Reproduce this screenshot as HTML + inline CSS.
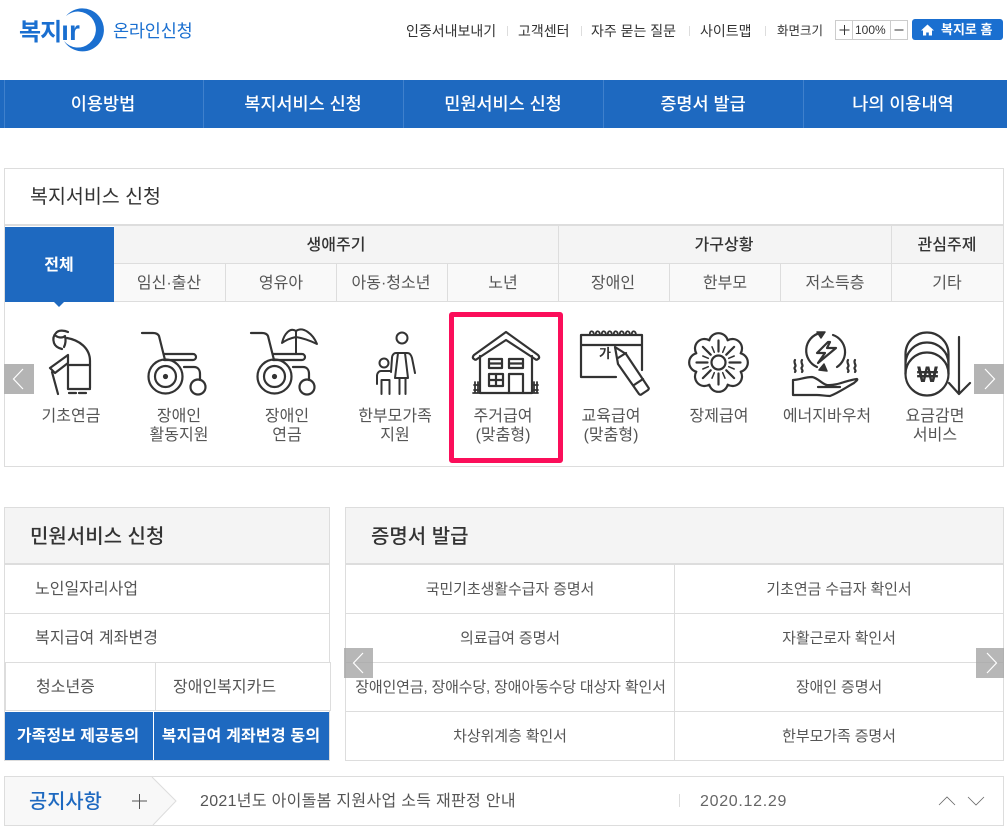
<!DOCTYPE html>
<html lang="ko"><head><meta charset="utf-8"><title>복지로 온라인신청</title>
<style>
html,body{margin:0;padding:0;background:#fff}
body{width:1007px;height:829px;overflow:hidden;position:relative;font-family:"Liberation Sans","Noto Sans CJK KR",sans-serif;color:#444}
.a{position:absolute;box-sizing:border-box}
.t{position:absolute;white-space:nowrap;text-align:center;transform:translateX(-50%);line-height:20px}
.l{position:absolute;white-space:nowrap;line-height:20px}
.ln{position:absolute;background:#ddd}
svg{position:absolute;overflow:visible}
.ic{fill:none;stroke:#333;stroke-width:2.2;stroke-linecap:round;stroke-linejoin:round}
.lab{font-size:16px;color:#555;line-height:20px}
.r{font-size:15px;color:#555;letter-spacing:-.1px}
</style></head><body>

<!-- logo -->
<svg style="left:0;top:0" width="110" height="60"><path d="M66 16A21.500 21.500 0 1 1 64 41A18 18 0 1 0 66 16Z" fill="#1a6fd0"/></svg>
<div class="l" style="left:19px;top:16px;font-size:24px;font-weight:700;color:#1a6fd0;line-height:30px;letter-spacing:-1px">복지<span style="font-family:'Liberation Sans';font-size:28px;letter-spacing:0">ır</span></div>
<div class="l" style="left:113px;top:21px;font-size:17.500px;color:#1a6fd0;letter-spacing:-.2px">온라인신청</div>

<!-- util -->
<div class="l" style="left:406px;top:21px;font-size:14px;color:#333">인증서내보내기</div>
<div class="l" style="left:518px;top:21px;font-size:14px;color:#333">고객센터</div>
<div class="l" style="left:591px;top:21px;font-size:14px;color:#333">자주 묻는 질문</div>
<div class="l" style="left:700px;top:21px;font-size:14px;color:#333">사이트맵</div>
<div class="l" style="left:777px;top:21px;font-size:12.500px;color:#333">화면크기</div>
<div class="ln" style="left:507px;top:26px;width:1px;height:10px"></div>
<div class="ln" style="left:581px;top:26px;width:1px;height:10px"></div>
<div class="ln" style="left:689px;top:26px;width:1px;height:10px"></div>
<div class="ln" style="left:765px;top:26px;width:1px;height:10px"></div>
<div class="a" style="left:835px;top:20px;width:73px;height:20px;border:1px solid #ccc"></div>
<div class="ln" style="left:852px;top:20px;width:1px;height:20px;background:#ccc"></div>
<div class="ln" style="left:890px;top:20px;width:1px;height:20px;background:#ccc"></div>
<svg style="left:0;top:0" width="1" height="1"><path d="M839.500 30h10M844.500 25v10M894.500 30h9" stroke="#333" stroke-width="1" fill="none"/></svg>
<div class="l" style="left:855px;top:20px;font-size:12px;color:#333">100%</div>
<div class="a" style="left:912px;top:19px;width:91px;height:21px;background:#1a6fd0;border-radius:3px"></div>
<svg style="left:0;top:0" width="1" height="1"><path d="M921 30.500l6.500-6 6.500 6h-2v5h-3.200v-3h-2.600v3H923v-5z" fill="#fff"/></svg>
<div class="l" style="left:941px;top:20px;font-size:13px;font-weight:700;color:#fff">복지로 홈</div>

<!-- nav -->
<div class="a" style="left:0;top:80px;width:1007px;height:48px;background:#1e69c0"></div>
<div class="ln" style="left:4px;top:80px;width:1px;height:48px;background:#3f80cc"></div>
<div class="ln" style="left:203px;top:80px;width:1px;height:48px;background:#3f80cc"></div>
<div class="ln" style="left:403px;top:80px;width:1px;height:48px;background:#3f80cc"></div>
<div class="ln" style="left:603px;top:80px;width:1px;height:48px;background:#3f80cc"></div>
<div class="ln" style="left:803px;top:80px;width:1px;height:48px;background:#3f80cc"></div>
<div class="t" style="left:103px;top:93.500px;font-size:17.500px;font-weight:500;color:#fff">이용방법</div>
<div class="t" style="left:303px;top:93.500px;font-size:17.500px;font-weight:500;color:#fff">복지서비스 신청</div>
<div class="t" style="left:503px;top:93.500px;font-size:17.500px;font-weight:500;color:#fff">민원서비스 신청</div>
<div class="t" style="left:703px;top:93.500px;font-size:17.500px;font-weight:500;color:#fff">증명서 발급</div>
<div class="t" style="left:903px;top:93.500px;font-size:17.500px;font-weight:500;color:#fff">나의 이용내역</div>

<!-- panel 1 -->
<div class="a" style="left:4px;top:168px;width:1000px;height:299px;border:1px solid #ddd"></div>
<div class="ln" style="left:5px;top:224px;width:998px;height:2px"></div>
<div class="l" style="left:30px;top:187px;font-size:19.500px;color:#333">복지서비스 신청</div>
<div class="a" style="left:114px;top:226px;width:889px;height:38px;background:#f4f4f4"></div>
<div class="a" style="left:114px;top:264px;width:889px;height:37px;background:#f9f9f9"></div>
<div class="ln" style="left:114px;top:263px;width:889px;height:1px"></div>
<div class="ln" style="left:5px;top:301px;width:998px;height:1px"></div>
<div class="ln" style="left:225px;top:264px;width:1px;height:37px"></div>
<div class="ln" style="left:336px;top:264px;width:1px;height:37px"></div>
<div class="ln" style="left:447px;top:264px;width:1px;height:37px"></div>
<div class="ln" style="left:558px;top:226px;width:1px;height:75px"></div>
<div class="ln" style="left:669px;top:264px;width:1px;height:37px"></div>
<div class="ln" style="left:780px;top:264px;width:1px;height:37px"></div>
<div class="ln" style="left:891px;top:226px;width:1px;height:75px"></div>
<div class="a" style="left:5px;top:227px;width:109px;height:75px;background:#1e69c0"></div>
<svg style="left:0;top:0" width="1" height="1"><path d="M54 302h10l-5 5z" fill="#1e69c0"/></svg>
<div class="t" style="left:59px;top:256px;font-size:16px;font-weight:700;color:#fff">전체</div>
<div class="t" style="left:336px;top:236px;font-size:16px;font-weight:500;color:#333">생애주기</div>
<div class="t" style="left:724px;top:236px;font-size:16px;font-weight:500;color:#333">가구상황</div>
<div class="t" style="left:947px;top:236px;font-size:16px;font-weight:500;color:#333">관심주제</div>
<div class="t" style="left:169px;top:274px;font-size:16px;color:#555">임신·출산</div>
<div class="t" style="left:281px;top:274px;font-size:16px;color:#555">영유아</div>
<div class="t" style="left:391px;top:274px;font-size:16px;color:#555">아동·청소년</div>
<div class="t" style="left:503px;top:274px;font-size:16px;color:#555">노년</div>
<div class="t" style="left:613px;top:274px;font-size:16px;color:#555">장애인</div>
<div class="t" style="left:725px;top:274px;font-size:16px;color:#555">한부모</div>
<div class="t" style="left:835px;top:274px;font-size:16px;color:#555">저소득층</div>
<div class="t" style="left:947px;top:274px;font-size:16px;color:#555">기타</div>

<!-- carousel arrows -->
<div class="a" style="left:4px;top:364px;width:30px;height:30px;background:#b4b4b4"></div>
<div class="a" style="left:974px;top:364px;width:30px;height:30px;background:#b4b4b4"></div>
<svg style="left:0;top:0" width="1" height="1"><path d="M23 369l-9.500 10 9.500 10M985 369l9.500 10-9.500 10" fill="none" stroke="#fff" stroke-width="1.200"/></svg>

<!-- icons -->
<svg class="ic" style="left:0;top:0" width="1" height="1">
<!-- grandma -->
<path d="M68 332c-4-2-10-2-12 1-3 3-3 7-2 10 1 3 4 5 8 6M56 336c3 2 7 2 9 0 1 4 1 7-1 11"/>
<path d="M67 338c12 2 23 10 23 23v27M68 355L50 368l5 5 13-10M68 355v8M52 372l6 22"/>
<path d="M68 365h22M68 365v24h22M69 393h7M79 393h7"/>
<!-- wheelchair 1 -->
<path d="M142 333h11c3 0 5 1 6 3l6 24"/><path d="M164 354h29a3 3 0 0 1 0 6h-29"/><path d="M184 367h10c4 0 6 3 6 7v6"/><circle cx="165.500" cy="376.500" r="17"/><circle cx="165.500" cy="376.500" r="10.500"/><circle cx="165.500" cy="376.500" r="1.500" fill="#333"/><circle cx="198" cy="387" r="7.500"/>
<!-- wheelchair 2 -->
<path d="M251 333h11c3 0 5 1 6 3l6 24"/><path d="M273 354h29a3 3 0 0 1 0 6h-29"/><path d="M293 367h10c4 0 6 3 6 7v6"/><circle cx="274.500" cy="376.500" r="17"/><circle cx="274.500" cy="376.500" r="10.500"/><circle cx="274.500" cy="376.500" r="1.500" fill="#333"/><circle cx="307" cy="387" r="7.500"/>
<path d="M296 353v-20M296 331c-6-4-12 3-14 12 4-3 9-5 14-6M296 331c7-5 17 3 21 13-6-3-15-6-21-7z" stroke-width="2"/>
<!-- family -->
<circle cx="402" cy="338" r="5.500" stroke-width="2"/>
<path d="M391 372l1-14c0-3 2-5 4-5h11c3 0 4 2 5 5l3 15M398 353l-3 25h13l-3-25M399.500 378v16M405.500 378v16" stroke-width="2"/>
<circle cx="384" cy="363" r="4.500" stroke-width="2"/><path d="M377 384v-8c0-3 2-5 4-5h9M381.500 394v-14h8v14" stroke-width="2"/>
<!-- house -->
<path d="M474 359c-2-1-1-3 0-4l32-23 32 23c1 1 2 3 0 4-1 1-2 1-3 0l-29-19-29 19c-1 1-2 1-3 0z"/>
<path d="M480 356v37h52v-37"/><rect x="489" y="359" width="13" height="9"/><rect x="509" y="359" width="14" height="9"/><path d="M489 363.500h13M509 363.500h14"/><rect x="489" y="374" width="14" height="12"/><path d="M496 374v12M489 380h14"/><path d="M509 393v-19h14v19"/>
<path d="M474 385h6M474 390h6M475 382v11M478 382v11M532 385h6M532 390h6M534 382v11M537 382v11M473 393h65" stroke-width="1.800"/>
<!-- calendar/pencil -->
<path d="M616 377h-35V335h61v35M581 345h61"/>
<path d="M590 335c-1-5 4-5 4 0M596 335c-1-5 4-5 4 0M602 335c-1-5 4-5 4 0M608 335c-1-5 4-5 4 0M614 335c-1-5 4-5 4 0M620 335c-1-5 4-5 4 0M626 335c-1-5 4-5 4 0M632 335c-1-5 4-5 4 0" stroke-width="1.800"/>
<path d="M615 347l11 7 22 33c1 1 1 2 0 3l-6 4c-1 1-2 1-3 0l-21-30zM618 358l8-5M634 385l9-6"/>
<!-- flower -->
<circle cx="718.500" cy="362.500" r="7"/>
<path d="M727.700 340.300A9.500 9.500 0 0 1 740.700 353.300A9.500 9.500 0 0 1 740.700 371.700A9.500 9.500 0 0 1 727.700 384.700A9.500 9.500 0 0 1 709.300 384.700A9.500 9.500 0 0 1 696.300 371.700A9.500 9.500 0 0 1 696.300 353.300A9.500 9.500 0 0 1 709.300 340.300A9.500 9.500 0 0 1 727.700 340.300Z"/>
<path d="M718.500 351.500v-11M718.500 373.500v11M707.500 362.500h-11M729.500 362.500h11M710.700 354.700l-7.800-7.800M726.300 354.700l7.800-7.800M710.700 370.300l-7.800 7.800M726.300 370.300l7.800 7.800"/>
<path d="M722.700 352.300l2.300-5.500M714.300 352.300l-2.300-5.500M722.700 372.700l2.300 5.500M714.300 372.700l-2.300 5.500M708.300 358.300l-5.500-2.300M708.300 366.700l-5.500 2.300M728.700 358.300l5.500-2.300M728.700 366.700l5.500 2.300" stroke-width="1.500"/>
<!-- energy -->
<path d="M820 333a18 18 0 0 0-3 34M833 335a18 18 0 0 1 4 32"/>
<path d="M817 332l8 0-4 6zM827 371l-8-1 5-6z" fill="#333" stroke-width="1.500"/>
<path d="M828 342l-11 11h8l-7 10 18-15h-9l3-6z"/>
<path d="M795 360c-2 3 2 5 0 7s2 3 0 5M802 360c-2 3 2 5 0 7s2 3 0 5M848 360c-2 3 2 5 0 7s2 3 0 5M855 360c-2 3 2 5 0 7s2 3 0 5"/>
<path d="M793 380c6 0 12-3 19-3 6 1 10 7 15 8 10 1 20-5 30-6 1 1-1 2-3 4-9 5-16 10-24 13-6 0-8-1-13-1h-24zM818 387h22"/>
<!-- coins -->
<circle cx="927" cy="374" r="21.500"/>
<path d="M905.500 374v-20a21.500 21.500 0 0 1 43 0v20M905.500 364a21.500 21.500 0 0 1 43 0"/>
<path d="M959 337v57M949 383l10 11 11-11"/>
</svg>
<div class="t" style="left:927.500px;top:365px;font-family:'Liberation Sans',sans-serif;font-size:22px;font-weight:700;color:#333">₩</div>
<div class="t" style="left:605px;top:344px;font-size:13px;font-weight:700;color:#333">가</div>

<!-- labels -->
<div class="t lab" style="left:71px;top:407px">기초연금</div>
<div class="t lab" style="left:179px;top:407px">장애인</div><div class="t lab" style="left:179px;top:426px">활동지원</div>
<div class="t lab" style="left:287px;top:407px">장애인</div><div class="t lab" style="left:287px;top:426px">연금</div>
<div class="t lab" style="left:395px;top:407px">한부모가족</div><div class="t lab" style="left:395px;top:426px">지원</div>
<div class="t lab" style="left:503px;top:407px">주거급여</div><div class="t lab" style="left:503px;top:426px">(맞춤형)</div>
<div class="t lab" style="left:611px;top:407px">교육급여</div><div class="t lab" style="left:611px;top:426px">(맞춤형)</div>
<div class="t lab" style="left:719px;top:407px">장제급여</div>
<div class="t lab" style="left:827px;top:407px">에너지바우처</div>
<div class="t lab" style="left:935px;top:407px">요금감면</div><div class="t lab" style="left:935px;top:426px">서비스</div>
<div class="a" style="left:449px;top:312px;width:114px;height:151px;border:5px solid #fb0e5a;border-radius:3px"></div>

<!-- left box -->
<div class="a" style="left:4px;top:507px;width:326px;height:254px;border:1px solid #ddd"></div>
<div class="a" style="left:5px;top:508px;width:324px;height:55px;background:#f4f4f4"></div>
<div class="ln" style="left:5px;top:563px;width:324px;height:2px"></div>
<div class="ln" style="left:5px;top:613px;width:324px;height:1px"></div>
<div class="a" style="left:5px;top:662px;width:326px;height:49px;border:1px solid #ddd;background:#fff"></div>
<div class="ln" style="left:155px;top:662px;width:1px;height:49px"></div>
<div class="l" style="left:30px;top:527px;font-size:20px;font-weight:500;color:#333">민원서비스 신청</div>
<div class="l" style="left:35px;top:580px;font-size:16px;color:#555">노인일자리사업</div>
<div class="l" style="left:35px;top:629px;font-size:16px;color:#555;letter-spacing:.1px">복지급여 계좌변경</div>
<div class="l" style="left:36px;top:678px;font-size:16px;color:#555">청소년증</div>
<div class="l" style="left:173px;top:678px;font-size:16px;color:#555">장애인복지카드</div>
<div class="a" style="left:5px;top:712px;width:148px;height:48px;background:#1e69c0"></div>
<div class="a" style="left:154px;top:712px;width:175px;height:48px;background:#1e69c0"></div>
<div class="t" style="left:78px;top:727px;font-size:16px;font-weight:700;color:#fff">가족정보 제공동의</div>
<div class="t" style="left:241px;top:727px;font-size:16px;font-weight:700;color:#fff;letter-spacing:.2px">복지급여 계좌변경 동의</div>

<!-- right box -->
<div class="a" style="left:345px;top:507px;width:659px;height:254px;border:1px solid #ddd"></div>
<div class="a" style="left:346px;top:508px;width:657px;height:55px;background:#f4f4f4"></div>
<div class="ln" style="left:346px;top:563px;width:657px;height:2px"></div>
<div class="ln" style="left:346px;top:613px;width:657px;height:1px"></div>
<div class="ln" style="left:346px;top:662px;width:657px;height:1px"></div>
<div class="ln" style="left:346px;top:711px;width:657px;height:1px"></div>
<div class="ln" style="left:674px;top:565px;width:1px;height:195px"></div>
<div class="l" style="left:371px;top:527px;font-size:20px;font-weight:500;color:#333">증명서 발급</div>
<div class="t r" style="left:510px;top:580px">국민기초생활수급자 증명서</div>
<div class="t r" style="left:839px;top:580px">기초연금 수급자 확인서</div>
<div class="t r" style="left:510px;top:629px">의료급여 증명서</div>
<div class="t r" style="left:839px;top:629px">자활근로자 확인서</div>
<div class="t r" style="left:510.500px;top:678px;letter-spacing:-.16px">장애인연금, 장애수당, 장애아동수당 대상자 확인서</div>
<div class="t r" style="left:839px;top:678px">장애인 증명서</div>
<div class="t r" style="left:510px;top:727px">차상위계층 확인서</div>
<div class="t r" style="left:839px;top:727px">한부모가족 증명서</div>
<div class="a" style="left:344px;top:648px;width:29px;height:30px;background:rgba(165,165,165,.8)"></div>
<div class="a" style="left:976px;top:648px;width:28px;height:30px;background:rgba(165,165,165,.8)"></div>
<svg style="left:0;top:0" width="1" height="1"><path d="M363 653l-9.500 10 9.500 10M987 653l9.500 10-9.500 10" fill="none" stroke="#fff" stroke-width="1.200"/></svg>

<!-- notice -->
<div class="a" style="left:4px;top:776px;width:1000px;height:50px;border:1px solid #ddd"></div>
<svg style="left:0;top:0" width="1" height="1"><path d="M5 777H152L176 801 153 825H5z" fill="#f8f8f8"/><path d="M152 777L176 801 153 825" fill="none" stroke="#ddd"/><path d="M132 801h15M139.500 794v15" stroke="#555" fill="none"/><path d="M939 805l8-8 8 8M968 797l8 8 8-8" stroke="#666" stroke-width=".8" fill="none"/></svg>
<div class="l" style="left:29px;top:792px;font-size:19.800px;font-weight:500;color:#1e69c0">공지사항</div>
<div class="l" style="left:200px;top:792px;font-size:16px;color:#555;letter-spacing:.3px">2021년도 아이돌봄 지원사업 소득 재판정 안내</div>
<div class="ln" style="left:679px;top:794px;width:1px;height:13px"></div>
<div class="l" style="left:700px;top:792px;font-size:16px;color:#666;letter-spacing:.7px">2020.12.29</div>
</body></html>
